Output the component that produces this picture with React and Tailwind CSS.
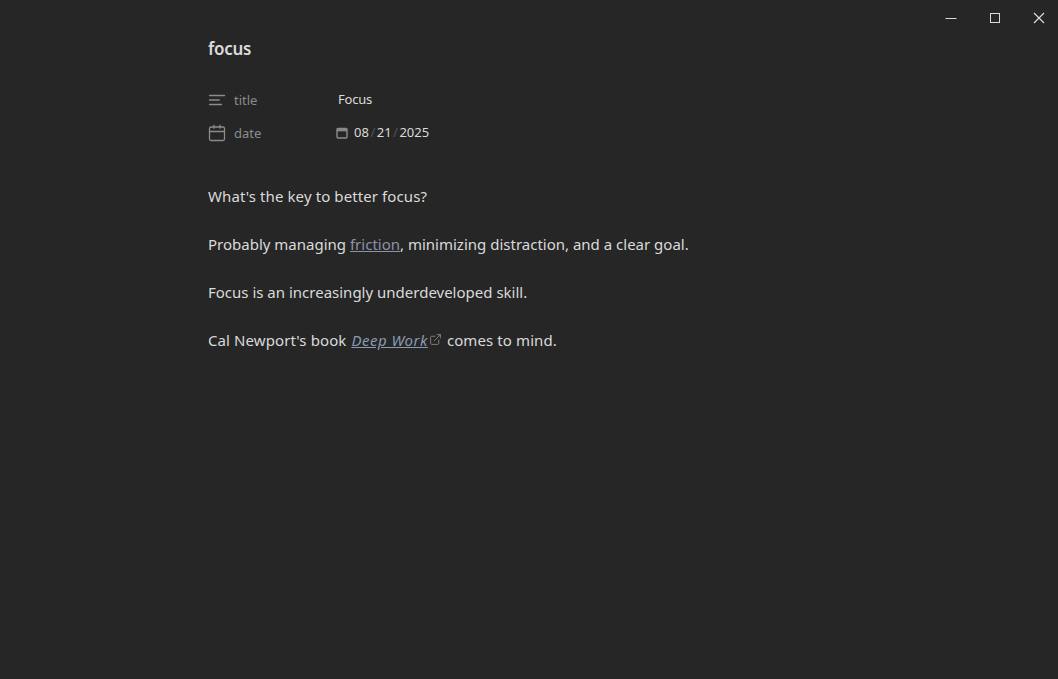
import React from "react";

const Icon = ({ children, className = "", strokeWidth = "2" }) => (
  <svg viewBox="0 0 24 24" fill="none" stroke="currentColor" strokeWidth={strokeWidth} strokeLinecap="round" strokeLinejoin="round" className={className}>{children}</svg>
);

export default function App() {
  return (
    <div className="relative h-[679px] w-[1058px] overflow-hidden bg-[#262626] font-['Noto_Sans',sans-serif] text-[#dadada]">
      <div className="absolute right-[-3px] top-0 flex h-9 items-center text-[#dadada]">
        <div className="flex h-9 w-11 items-center justify-center">
          <svg width="12" height="12" viewBox="0 0 12 12" stroke="currentColor" fill="none"><path d="M0.5 6.5h11" /></svg>
        </div>
        <div className="flex h-9 w-11 items-center justify-center">
          <svg width="12" height="12" viewBox="0 0 12 12" stroke="currentColor" fill="none"><rect x="1.5" y="1.5" width="9" height="9" /></svg>
        </div>
        <div className="flex h-9 w-11 items-center justify-center">
          <svg width="12" height="12" viewBox="0 0 12 12" stroke="currentColor" fill="none" strokeWidth="1.2"><path d="M1 1l10 10M11 1L1 11" /></svg>
        </div>
      </div>
      <div className="ml-[208px] w-[640px] pt-[37px]">
        <h1 className="text-[17px] font-semibold leading-[24px] tracking-[-0.3px] text-[#dadada]">focus</h1>
        <div className="mt-[22px] flex h-[33px] items-center text-[13px]">
          <div className="flex w-[130px] items-center gap-[8px] text-[#8c8c8c]">
            <Icon className="h-[18px] w-[18px]" strokeWidth="1.7"><path d="M22 6H2M15 12H2M18 18H2" /></Icon>
            <span className="translate-y-[1px]">title</span>
          </div>
          <span className="tracking-[-0.2px] text-[#dadada]">Focus</span>
        </div>
        <div className="flex h-[33px] items-center text-[13px]">
          <div className="flex w-[128px] items-center gap-[8px] text-[#8c8c8c]">
            <Icon className="h-[18px] w-[18px]" strokeWidth="1.7"><rect x="2" y="4" width="20" height="18" rx="2" /><path d="M16 1.5v4M8 1.5v4M2 10h20" /></Icon>
            <span className="translate-y-[1px]">date</span>
          </div>
          <div className="flex items-center text-[#dadada]">
            <svg width="12" height="12" viewBox="0 0 12 12" fill="none" stroke="#8c8c8c" strokeWidth="1.4" className="mr-[6px]"><rect x="1" y="1.5" width="10" height="9.5" rx="1" /><path d="M1 3.2h10" strokeWidth="2.2" /></svg>
            <span>08</span><span className="px-[1.5px] text-[#555]">/</span><span>21</span><span className="px-[1.5px] text-[#555]">/</span><span>2025</span>
          </div>
        </div>
        <div className="mt-[35px] flex flex-col gap-6 text-[15px] leading-[24px]">
          <p className="tracking-[0.1px]">What's the key to better focus?</p>
          <p>Probably managing <span className="text-[#8a94a6] underline">friction</span>, minimizing distraction, and a clear goal.</p>
          <p>Focus is an increasingly underdeveloped skill.</p>
          <p className="tracking-[0.1px]">Cal Newport's book <em className="ml-[1px] tracking-[0.5px] text-[#8a9bb0] underline">Deep Work</em><span className="ml-[1px] mr-[1px] inline-block align-[0px] text-[#8a8a8a]"><Icon className="h-[13px] w-[13px]" strokeWidth="1.6"><path d="M15 3h6v6M10 14 21 3M18 13v6a2 2 0 0 1-2 2H5a2 2 0 0 1-2-2V8a2 2 0 0 1 2-2h6" /></Icon></span> comes to mind.</p>
        </div>
      </div>
    </div>
  );
}
